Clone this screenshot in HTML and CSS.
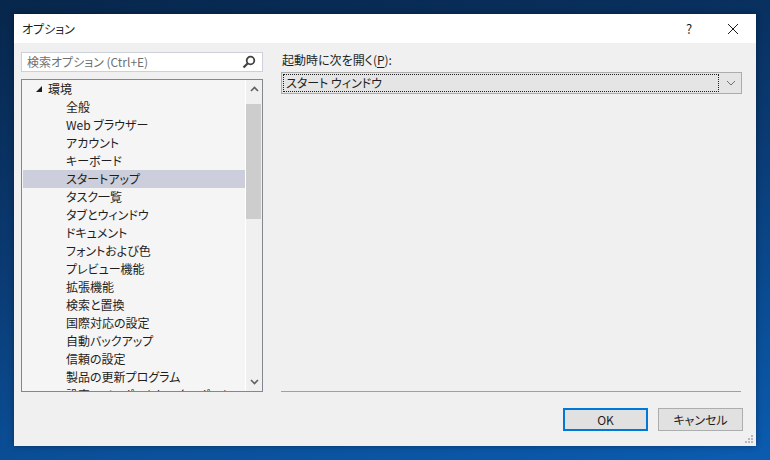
FILE: index.html
```html
<!DOCTYPE html>
<html lang="ja">

<head>
    <meta charset="UTF-8">
    <title>オプション</title>
    <link rel="stylesheet" href="styles.css">
</head>

<body>
    <div class="dialog">
        <div class="titlebar">
            <span class="title">オプション</span>
            <span class="help">?</span>
            <span class="close">
                <svg width="12" height="12" viewBox="0 0 12 12">
                    <path d="M1 1 L11 11 M11 1 L1 11" stroke="#1a1a1a" stroke-width="1" fill="none" />
                </svg>
            </span>
        </div>

        <div class="main">
            <div class="left">
                <div class="search">
                    <span class="placeholder">検索オプション (Ctrl+E)</span>
                    <svg class="search-icon" width="14" height="14" viewBox="0 0 14 14">
                        <circle cx="8.5" cy="5.5" r="3.8" stroke="#424242" stroke-width="1.8" fill="none" />
                        <path d="M5.8 8.2 L1.5 12.5" stroke="#424242" stroke-width="2.2" fill="none" />
                    </svg>
                </div>
                <div class="tree">
                    <div class="rows">
                        <div class="row parent">
                            <svg class="expander" width="6" height="6" viewBox="0 0 6 6">
                                <polygon points="6,0 6,6 0,6" fill="#1e1e1e" />
                            </svg>
                            環境
                        </div>
                        <div class="row child">全般</div>
                        <div class="row child">Web ブラウザー</div>
                        <div class="row child">アカウント</div>
                        <div class="row child">キーボード</div>
                        <div class="row child selected">スタートアップ</div>
                        <div class="row child">タスク一覧</div>
                        <div class="row child">タブとウィンドウ</div>
                        <div class="row child">ドキュメント</div>
                        <div class="row child">フォントおよび色</div>
                        <div class="row child">プレビュー機能</div>
                        <div class="row child">拡張機能</div>
                        <div class="row child">検索と置換</div>
                        <div class="row child">国際対応の設定</div>
                        <div class="row child">自動バックアップ</div>
                        <div class="row child">信頼の設定</div>
                        <div class="row child">製品の更新プログラム</div>
                        <div class="row child">設定のインポートとエクスポート</div>
                    </div>
                    <div class="scrollbar">
                        <svg class="arrow" width="9" height="6" viewBox="0 0 9 6">
                            <path d="M1 5 L4.5 1.5 L8 5" stroke="#606060" stroke-width="1.6" fill="none" />
                        </svg>
                        <div class="track">
                            <div class="thumb"></div>
                        </div>
                        <svg class="arrow" width="9" height="6" viewBox="0 0 9 6">
                            <path d="M1 1 L4.5 4.5 L8 1" stroke="#606060" stroke-width="1.6" fill="none" />
                        </svg>
                    </div>
                </div>
            </div>

            <div class="right">
                <div class="label">起動時に次を開く(<u>P</u>):</div>
                <div class="combo">
                    <div class="combo-value">スタート ウィンドウ</div>
                    <svg class="combo-arrow" width="10" height="6" viewBox="0 0 10 6">
                        <path d="M1 1 L5 5 L9 1" stroke="#707070" stroke-width="1" fill="none" />
                    </svg>
                </div>
                <div class="spacer"></div>
                <div class="separator"></div>
            </div>
        </div>

        <div class="footer">
            <button class="btn default">OK</button>
            <button class="btn">キャンセル</button>
            <div class="grip">
                <svg width="8" height="8" viewBox="0 0 8 8">
                    <rect x="6" y="0" width="2" height="2" fill="#b8b8b8" />
                    <rect x="3" y="3" width="2" height="2" fill="#b8b8b8" />
                    <rect x="6" y="3" width="2" height="2" fill="#b8b8b8" />
                    <rect x="0" y="6" width="2" height="2" fill="#b8b8b8" />
                    <rect x="3" y="6" width="2" height="2" fill="#b8b8b8" />
                    <rect x="6" y="6" width="2" height="2" fill="#b8b8b8" />
                </svg>
            </div>
        </div>
    </div>
</body>

</html>
```

FILE: styles.css
```css
* {
    box-sizing: border-box;
}

body {
    margin: 0;
    width: 770px;
    height: 460px;
    overflow: hidden;
    background: linear-gradient(170deg, #07264b 0%, #0a3a72 45%, #0b5cb0 100%);
    font-family: "Noto Sans CJK JP", sans-serif;
    font-size: 12px;
    font-feature-settings: "palt";
    color: #1e1e1e;
}

.dialog {
    margin: 14px 0 0 14px;
    width: 742px;
    height: 432px;
    background: #f0f0f0;
    display: flex;
    flex-direction: column;
    position: relative;
    box-shadow: 0 0 6px rgba(0, 0, 0, 0.35);
}

.titlebar {
    height: 29px;
    background: #ffffff;
    display: flex;
    align-items: center;
    padding-left: 8px;
}

.title {
    flex: 1;
    line-height: 16px;
}

.help {
    width: 14px;
    text-align: center;
    font-size: 13px;
    margin-right: 31px;
}

.close {
    display: flex;
    margin-right: 17px;
}

.main {
    display: flex;
    gap: 18px;
    padding: 9px 14px 0 7px;
    height: 349px;
}

.left {
    width: 242px;
    display: flex;
    flex-direction: column;
    gap: 7px;
}

.search {
    height: 20px;
    background: #ffffff;
    border: 1px solid #cdd0d9;
    display: flex;
    align-items: center;
    padding: 0 6px 0 5px;
}

.placeholder {
    flex: 1;
    color: #707070;
    line-height: 16px;
}

.tree {
    height: 313px;
    border: 1px solid #828790;
    background: #f5f5f5;
    display: flex;
    overflow: hidden;
}

.rows {
    flex: 1;
    overflow: hidden;
    padding-left: 1px;
}

.row {
    height: 18px;
    line-height: 18px;
    white-space: nowrap;
}

.parent {
    padding-left: 13px;
    display: flex;
    align-items: center;
    gap: 6px;
}

.child {
    padding-left: 43px;
}

.selected {
    background: #cccedb;
}

.scrollbar {
    width: 17px;
    background: #f0f0f0;
    border-left: 1px solid #ffffff;
    display: flex;
    flex-direction: column;
    align-items: center;
}

.arrow {
    margin: 6px 0;
}

.track {
    flex: 1;
    width: 100%;
    padding-top: 6px;
}

.thumb {
    width: 15px;
    height: 115px;
    background: #cdcdcd;
}

.right {
    flex: 1;
    display: flex;
    flex-direction: column;
}

.label {
    line-height: 16px;
    padding-left: 1px;
}

.label u {
    text-underline-offset: 2px;
}

.combo {
    margin-top: 4px;
    height: 22px;
    background: #e5e5e5;
    border: 1px solid #acacac;
    display: flex;
    align-items: center;
    padding: 1px;
}

.combo-value {
    flex: 1;
    height: 18px;
    line-height: 16px;
    border: 1px dotted #1e1e1e;
    padding-left: 2px;
}

.combo-arrow {
    margin: 0 4px 0 7px;
}

.spacer {
    flex: 1;
}

.separator {
    height: 1px;
    background: #a0a0a0;
    margin-right: 1px;
}

.footer {
    display: flex;
    justify-content: flex-end;
    gap: 10px;
    padding: 16px 13px 0 0;
}

.btn {
    width: 85px;
    height: 23px;
    background: #e1e1e1;
    border: 1px solid #adadad;
    font-family: "Noto Sans CJK JP", sans-serif;
    font-size: 12px;
    font-feature-settings: "palt";
    color: #1e1e1e;
    padding: 0;
    line-height: 16px;
}

.default {
    border: 2px solid #0078d7;
}

.grip {
    position: absolute;
    right: 3px;
    bottom: 3px;
    display: flex;
}
```
